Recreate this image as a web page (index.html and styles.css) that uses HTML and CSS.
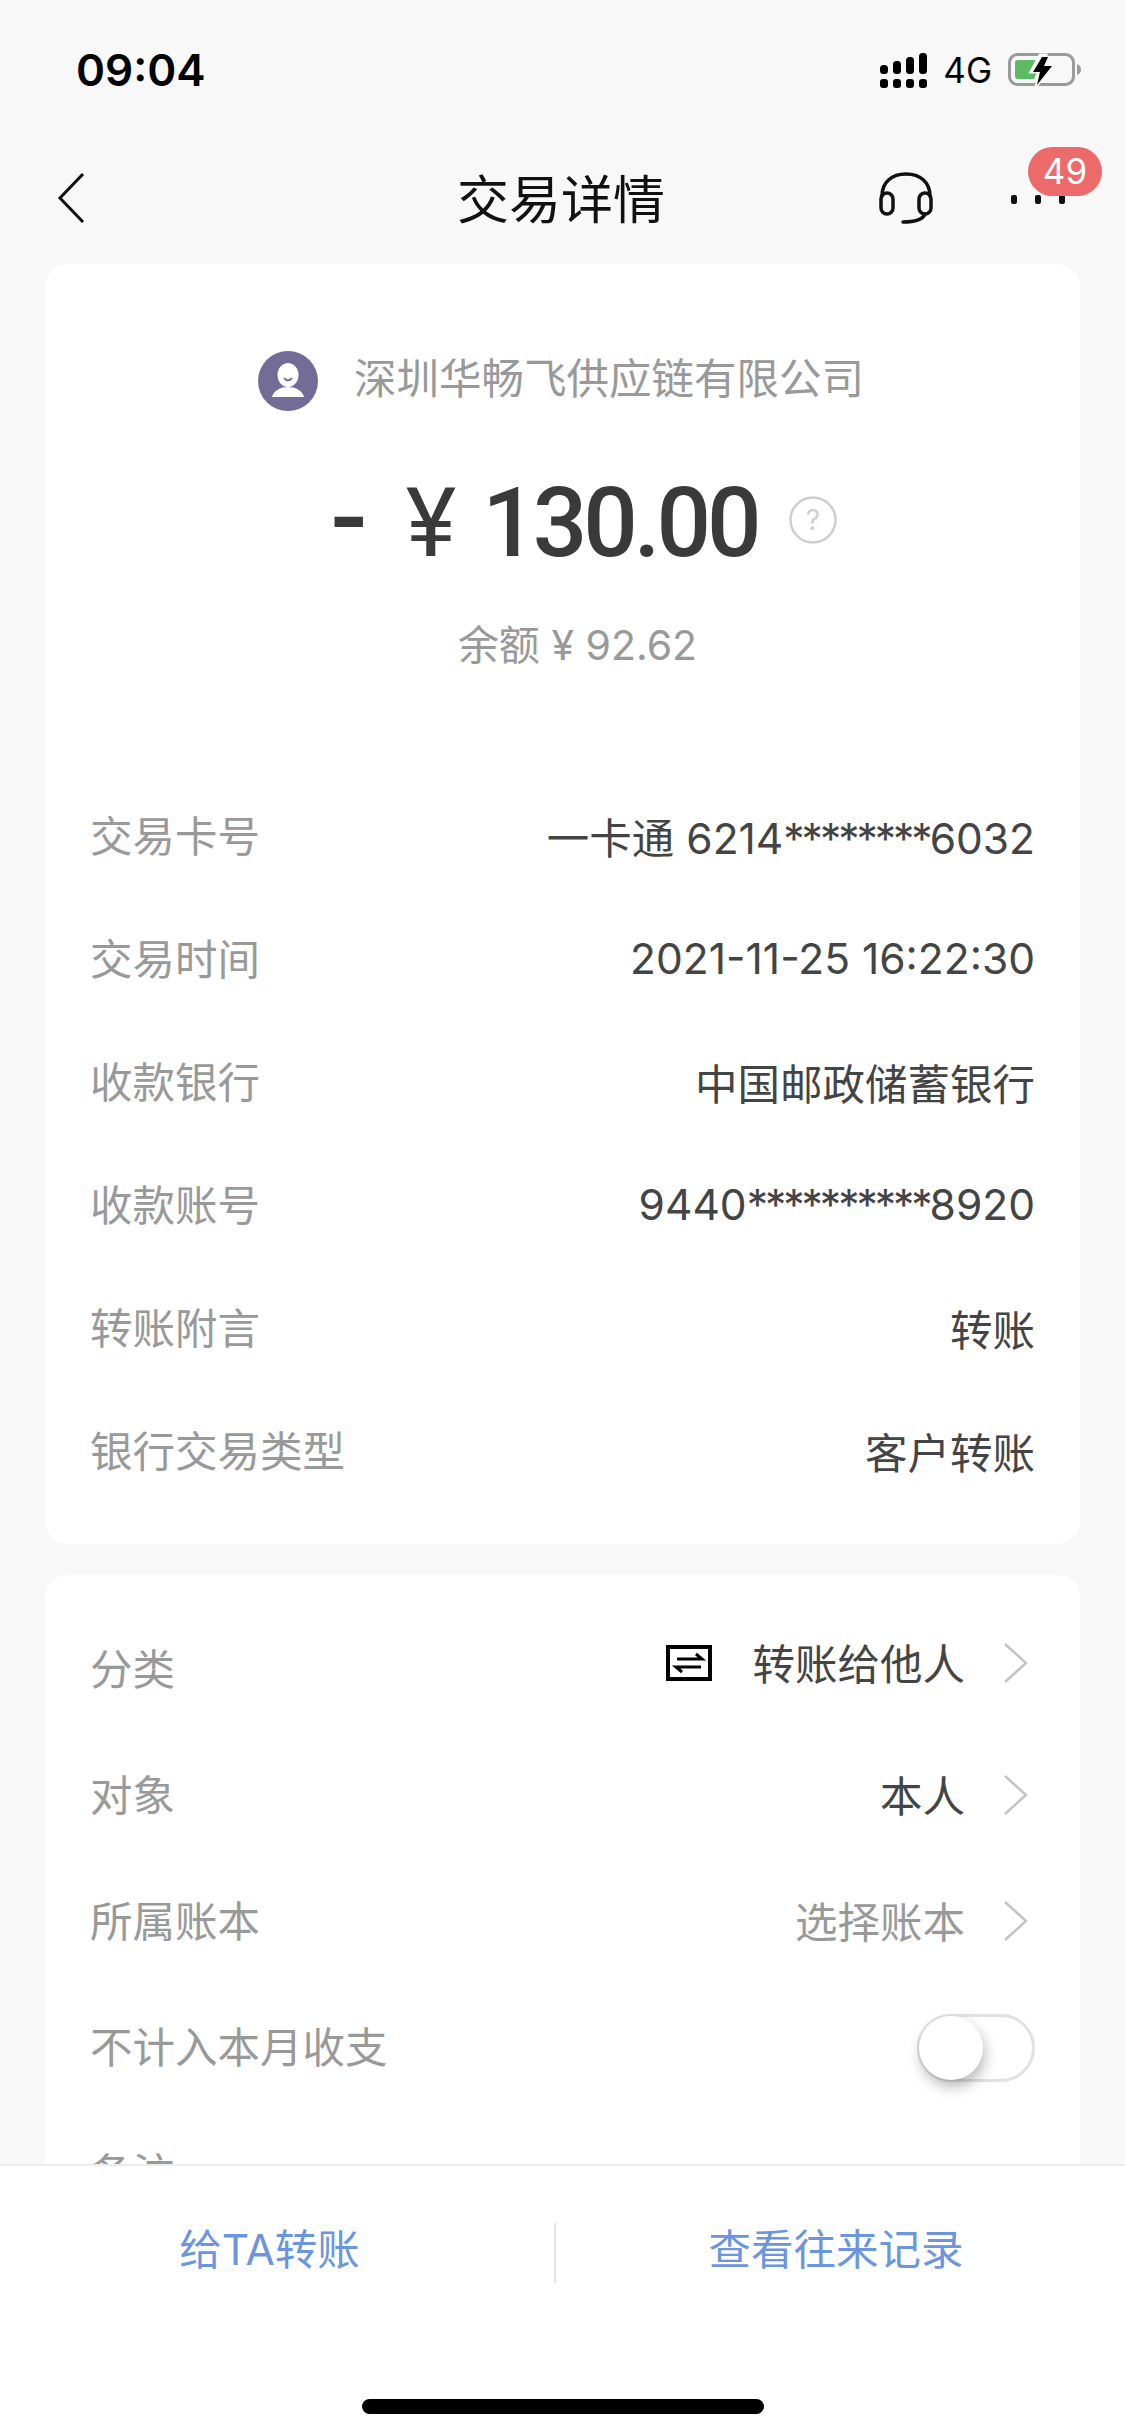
FILE: index.html
```html
<!DOCTYPE html>
<html lang="zh-CN">
<head>
    <meta charset="UTF-8">
    <meta name="viewport" content="width=device-width, initial-scale=1.0">
    <title>交易详情</title>
    <link rel="stylesheet" href="styles.css">
</head>
<body>
    <div class="screen">
        <div class="status-bar">
            <span class="status-time">09:04</span>
            <div class="status-icons">
                <svg class="icon-signal" width="47" height="35" viewBox="0 0 47 35">
                    <rect x="0" y="12" width="8" height="9" rx="3.5"/>
                    <rect x="13" y="8" width="8" height="13" rx="3.5"/>
                    <rect x="26" y="4" width="8" height="17" rx="3.5"/>
                    <rect x="39" y="0" width="8" height="21" rx="3.5"/>
                    <rect x="0" y="26" width="8" height="9" rx="3"/>
                    <rect x="13" y="26" width="8" height="9" rx="3"/>
                    <rect x="26" y="26" width="8" height="9" rx="3"/>
                    <rect x="39" y="26" width="8" height="9" rx="3"/>
                </svg>
                <span class="status-net">4G</span>
                <svg class="icon-battery" width="74" height="36" viewBox="0 0 74 36">
                    <rect x="1.5" y="2.5" width="64" height="30" rx="8" fill="none" stroke="#9a9a9a" stroke-width="3"/>
                    <path d="M7 11a3 3 0 0 1 3-3h20l-8 12h7l-3 7H10a3 3 0 0 1-3-3z" fill="#5dbb63"/>
                    <path d="M32 3h6l-4 11h8L28 35l3-15h-8z" fill="#f8f8f8" stroke="#f8f8f8" stroke-width="3"/>
                    <path d="M34 5h6l-4 9h8L29 33l3-13h-7z" fill="#000"/>
                    <path d="M69 12c3 1 4 3 4 5.500s-1 4.500-4 5.500z" fill="#9a9a9a"/>
                </svg>
            </div>
        </div>

        <div class="nav-bar">
            <div class="nav-left">
                <svg width="28" height="50" viewBox="0 0 28 50" fill="none" stroke="#111" stroke-width="3">
                    <path d="M26 1 3 25l23 24"/>
                </svg>
            </div>
            <h1 class="nav-title">交易详情</h1>
            <div class="nav-right">
                <svg width="54" height="52" viewBox="0 0 54 52" fill="none" stroke="#111" stroke-width="3.500" stroke-linecap="round">
                    <path d="M3 24C3 10 13 2 27 2s24 8 24 22"/>
                    <rect x="2" y="21" width="12" height="21" rx="6"/>
                    <rect x="40" y="21" width="12" height="21" rx="6"/>
                    <path d="M46 42c-2 5-9 8-22 8"/>
                </svg>
                <div class="more">
                    <span class="more-dot"></span>
                    <span class="more-dot"></span>
                    <span class="more-dot"></span>
                    <span class="badge">49</span>
                </div>
            </div>
        </div>

        <div class="content">
            <section class="card card-top">
                <div class="payee">
                    <svg class="payee-avatar" width="60" height="60" viewBox="0 0 60 60">
                        <circle cx="30" cy="30" r="30" fill="#736c96"/>
                        <ellipse cx="30" cy="24" rx="10.500" ry="12" fill="#fff"/>
                        <path d="M26 27c2 3 6 3 8 0" fill="none" stroke="#736c96" stroke-width="2"/>
                        <path d="M14 46c2-7 9-10 16-10s14 3 16 10z" fill="#fff"/>
                    </svg>
                    <span class="payee-name">深圳华畅飞供应链有限公司</span>
                </div>
                <div class="amount">
                    <span class="amount-minus">-</span>
                    <span class="amount-yen">¥</span>
                    <span class="amount-num">130.00</span>
                    <svg class="amount-help" width="48" height="48" viewBox="0 0 48 48">
                        <circle cx="24" cy="24" r="22.500" fill="none" stroke="#cfcfcf" stroke-width="2.500"/>
                        <text x="24" y="34" text-anchor="middle" class="help-mark">?</text>
                    </svg>
                </div>
                <div class="balance">余额 ¥ 92.62</div>

                <div class="info-list">
                    <div class="row"><span class="row-label">交易卡号</span><span class="row-value">一卡通 6214<span class="mask">********</span>6032</span></div>
                    <div class="row"><span class="row-label">交易时间</span><span class="row-value">2021-11-25 16:22:30</span></div>
                    <div class="row"><span class="row-label">收款银行</span><span class="row-value">中国邮政储蓄银行</span></div>
                    <div class="row"><span class="row-label">收款账号</span><span class="row-value">9440<span class="mask">**********</span>8920</span></div>
                    <div class="row"><span class="row-label">转账附言</span><span class="row-value">转账</span></div>
                    <div class="row"><span class="row-label">银行交易类型</span><span class="row-value">客户转账</span></div>
                </div>
            </section>

            <section class="card card-bottom">
                <div class="row row-tall">
                    <span class="row-label">分类</span>
                    <div class="row-link row-link-raised">
                        <svg class="icon-category" width="46" height="36" viewBox="0 0 46 36">
                            <rect x="2" y="2" width="42" height="32" fill="none" stroke="#000" stroke-width="4"/>
                            <path d="M11 14h25l-6-5" fill="none" stroke="#000" stroke-width="3"/>
                            <path d="M35 22H10l6 5" fill="none" stroke="#000" stroke-width="3"/>
                        </svg>
                        <span class="row-value">转账给他人</span>
                        <svg class="chevron" width="24" height="40" viewBox="0 0 24 40" fill="none" stroke="#c4c4c4" stroke-width="2.500">
                            <path d="M1 1l21 19L1 39"/>
                        </svg>
                    </div>
                </div>
                <div class="row row-tall">
                    <span class="row-label">对象</span>
                    <div class="row-link">
                        <span class="row-value">本人</span>
                        <svg class="chevron" width="24" height="40" viewBox="0 0 24 40" fill="none" stroke="#c4c4c4" stroke-width="2.500">
                            <path d="M1 1l21 19L1 39"/>
                        </svg>
                    </div>
                </div>
                <div class="row row-tall">
                    <span class="row-label">所属账本</span>
                    <div class="row-link">
                        <span class="row-value row-value-muted">选择账本</span>
                        <svg class="chevron" width="24" height="40" viewBox="0 0 24 40" fill="none" stroke="#c4c4c4" stroke-width="2.500">
                            <path d="M1 1l21 19L1 39"/>
                        </svg>
                    </div>
                </div>
                <div class="row row-tall">
                    <span class="row-label">不计入本月收支</span>
                    <div class="toggle"><span class="toggle-knob"></span></div>
                </div>
                <div class="row row-tall">
                    <span class="row-label">备注</span>
                </div>
            </section>
        </div>

        <div class="bottom-bar">
            <div class="actions">
                <a class="action action-left">给TA转账</a>
                <span class="action-divider"></span>
                <a class="action action-right">查看往来记录</a>
            </div>
            <div class="home-indicator"></div>
        </div>
    </div>
</body>
</html>
```

FILE: styles.css
```css
* {
    box-sizing: border-box;
}
body {
    margin: 0;
    font-family: Inter, "Noto Sans CJK SC", sans-serif;
    background-color: #f8f8f8;
    color: #444;
}
.screen {
    width: 1125px;
    height: 2436px;
    display: flex;
    flex-direction: column;
    overflow: hidden;
}

/* status bar */
.status-bar {
    height: 140px;
    flex-shrink: 0;
    display: flex;
    justify-content: space-between;
    align-items: center;
    padding: 0 43px 0 76px;
}
.status-time {
    font-size: 44px;
    font-weight: 600;
    color: #000;
}
.status-icons {
    display: flex;
    align-items: center;
}
.status-net {
    font-size: 35px;
    color: #000;
    margin: 0 16px 0 16px;
}

/* nav */
.nav-bar {
    height: 116px;
    flex-shrink: 0;
    display: grid;
    grid-template-columns: 1fr auto 1fr;
    align-items: center;
    padding: 0 60px 0 57px;
}
.nav-title {
    margin: 0 0 2px;
    font-family: "Noto Sans CJK SC", sans-serif;
    font-size: 52px;
    font-weight: 400;
    color: #111;
    line-height: 1;
}
.nav-left {
    display: flex;
}
.nav-right {
    display: flex;
    justify-content: flex-end;
    align-items: center;
    gap: 78px;
}
.more {
    position: relative;
    display: flex;
    gap: 18px;
    margin-top: 2px;
}
.more-dot {
    width: 6px;
    height: 9px;
    border-radius: 2px;
    background-color: #111;
}
.badge {
    position: absolute;
    left: 17px;
    top: -48px;
    width: 74px;
    height: 49px;
    border-radius: 25px;
    background-color: #ec6a6a;
    color: #fff;
    font-size: 35px;
    line-height: 49px;
    text-align: center;
}

/* cards */
.content {
    flex: 1;
    min-height: 0;
    overflow: hidden;
    padding: 8px 45px 0;
}
.card {
    background-color: #fff;
    border-radius: 22px;
}
.card-top {
    padding: 84px 45px 31px;
    margin-bottom: 31px;
}
.card-bottom {
    padding: 31px 45px 0;
}
.payee {
    display: flex;
    justify-content: center;
    align-items: center;
    gap: 36px;
    height: 60px;
    margin-right: 3px;
}
.payee-avatar {
    margin-top: 6px;
}
.payee-name {
    font-family: "Noto Sans CJK SC", sans-serif;
    font-size: 42.500px;
    color: #999;
    margin-bottom: 6px;
}
.amount {
    display: flex;
    justify-content: center;
    align-items: center;
    height: 120px;
    margin-top: 52px;
    margin-left: 42px;
    color: #3a3a3a;
}
.amount-minus {
    font-family: Roboto, sans-serif;
    font-size: 110px;
    font-weight: 500;
    margin: 0 38px 6px 0;
}
.amount-yen {
    font-family: Roboto, sans-serif;
    font-size: 96px;
    margin: 5px 26px 0 0;
}
.amount-num {
    font-family: Roboto, sans-serif;
    font-size: 96px;
    font-weight: 500;
    letter-spacing: -4px;
    margin-top: 5px;
}
.amount-help {
    margin-left: 31px;
}
.help-mark {
    font-size: 28px;
    fill: #cfcfcf;
}
.balance {
    margin: 35px 0 0 30px;
    height: 60px;
    line-height: 60px;
    text-align: center;
    font-size: 41px;
    color: #999;
}
.info-list {
    margin-top: 100px;
}
.row {
    height: 123px;
    display: flex;
    justify-content: space-between;
    align-items: center;
    font-size: 42.500px;
}
.row-tall {
    height: 126px;
}
.row-label {
    font-family: "Noto Sans CJK SC", sans-serif;
    color: #999;
    margin-bottom: 6px;
}
.row-value {
    color: #444;
    margin-bottom: 3px;
}
.row-value-muted {
    color: #999;
}
.mask {
    letter-spacing: -3px;
}
.row-link {
    display: flex;
    align-items: center;
}
.row-link-raised {
    margin-bottom: 12px;
}
.icon-category {
    margin-right: 40px;
}
.chevron {
    margin-left: 39px;
    margin-right: 7px;
}

/* toggle */
.toggle {
    width: 118px;
    height: 68px;
    border: 3px solid #e2e2e2;
    border-radius: 34px;
    background-color: #fff;
    margin-top: 2px;
}
.toggle-knob {
    display: block;
    width: 64px;
    height: 64px;
    margin: -1px 0 0 -1px;
    border-radius: 50%;
    background-color: #fff;
    box-shadow: 2px 7px 14px rgba(0, 0, 0, 0.28);
}

/* bottom bar */
.bottom-bar {
    height: 272px;
    flex-shrink: 0;
    background-color: #fff;
    border-top: 2px solid #ececec;
}
.actions {
    display: grid;
    grid-template-columns: 554px 2px 1fr;
    grid-template-rows: 60px;
    align-items: center;
    margin-top: 57px;
}
.action {
    font-size: 42.500px;
    line-height: 40px;
    color: #6c95de;
    text-align: center;
    margin-bottom: 6px;
}
.action-left {
    padding-right: 15px;
}
.action-right {
    padding-right: 9px;
}
.action-divider {
    height: 60px;
    width: 2px;
    background-color: #e3e3e3;
}
.home-indicator {
    width: 402px;
    height: 15px;
    margin: 116px auto 0;
    border-radius: 8px;
    background-color: #000;
}
```
